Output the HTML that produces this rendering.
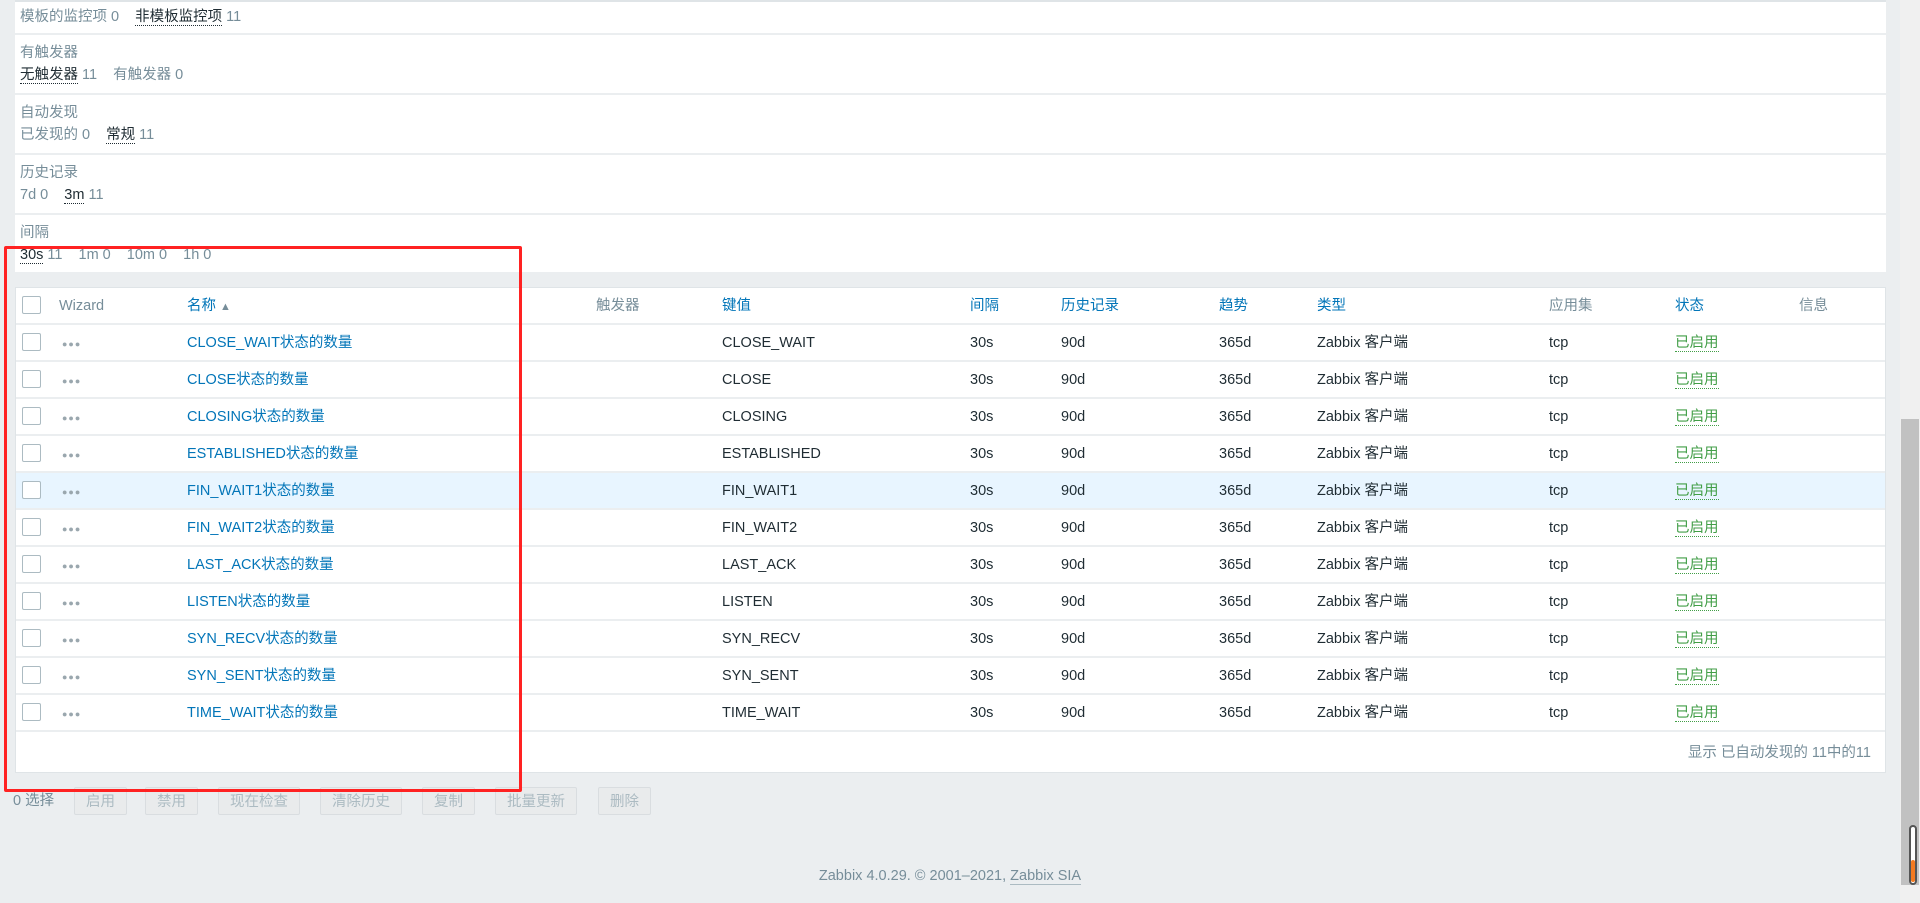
<!DOCTYPE html>
<html><head><meta charset="utf-8"><style>
*{margin:0;padding:0;box-sizing:border-box}
body{width:1920px;height:903px;overflow:hidden;background:#ebeef0;font-family:"Liberation Sans","Noto Sans CJK SC",sans-serif;font-size:14.5px;line-height:18px;color:#1f2c33;position:relative}
.abs{position:absolute}
.filter{left:15px;top:0;width:1871px;height:272px;background:#fff;border-top:2px solid #dfe4e7}
.sec{position:absolute;left:0;width:100%;border-bottom:2px solid #ebeef0}
.lbl{position:absolute;left:5px;color:#768d99;height:18px}
.val{position:absolute;left:5px;color:#768d99;white-space:nowrap;height:18px}
.val u{color:#1f2c33;text-decoration:none;border-bottom:1px dotted #1f2c33}
.val span{margin-right:12px}
.tbl{left:15px;top:287px;width:1871px;height:486px;background:#fff;border:1px solid #dfe4e7}
.row{position:absolute;left:0;width:100%;height:37px;border-bottom:2px solid #ebeef0}
.row div{position:absolute;top:9px;white-space:nowrap;height:18px;line-height:18px}
.cb{width:19px;height:19px;border:1px solid #acbbc2;border-radius:2px;background:#fff;top:8px!important;left:6px}
.lnk{color:#0275b8}
.hd{color:#768d99}
.en{color:#429e47;border-bottom:1px dotted #429e47}
.dots{color:#9aa7ae;font-size:9px;letter-spacing:1px}
.btn{position:absolute;top:787px;height:28px;border:1px solid #d9dde0;background:#e9ebec;color:#acbbc2;font-size:14.5px;padding:5px 11px 0;border-radius:2px}
</style></head><body>
<div class="abs filter">
 <div class="sec" style="top:0;height:33px"><div class="val" style="top:6px"><span>模板的监控项 0</span> <span><u>非模板监控项</u> 11</span></div></div>
 <div class="sec" style="top:33px;height:60px"><div class="lbl" style="top:9px">有触发器</div><div class="val" style="top:31px"><span><u>无触发器</u> 11</span> <span>有触发器 0</span></div></div>
 <div class="sec" style="top:93px;height:60px"><div class="lbl" style="top:9px">自动发现</div><div class="val" style="top:31px"><span>已发现的 0</span> <span><u>常规</u> 11</span></div></div>
 <div class="sec" style="top:153px;height:60px"><div class="lbl" style="top:9px">历史记录</div><div class="val" style="top:31px"><span>7d 0</span> <span><u>3m</u> 11</span></div></div>
 <div class="sec" style="top:213px;height:59px;border:none"><div class="lbl" style="top:9px">间隔</div><div class="val" style="top:31px"><span><u>30s</u> 11</span> <span>1m 0</span> <span>10m 0</span> <span>1h 0</span></div></div>
</div>
<div class="abs tbl">
 <div class="row" style="top:0"><div class="cb"></div><div class="hd" style="left:43px">Wizard</div><div class="lnk" style="left:171px">名称 <span style="color:#768d99;font-size:11px">▲</span></div><div class="hd" style="left:580px">触发器</div><div class="lnk" style="left:706px">键值</div><div class="lnk" style="left:954px">间隔</div><div class="lnk" style="left:1045px">历史记录</div><div class="lnk" style="left:1203px">趋势</div><div class="lnk" style="left:1301px">类型</div><div class="hd" style="left:1533px">应用集</div><div class="lnk" style="left:1659px">状态</div><div class="hd" style="left:1783px">信息</div></div>
</div>
<div class="abs" style="top:792px;color:#768d99;left:13px">0 选择</div>
<div class="btn" style="left:74px">启用</div>
<div class="btn" style="left:145px">禁用</div>
<div class="btn" style="left:218px">现在检查</div>
<div class="btn" style="left:320px">清除历史</div>
<div class="btn" style="left:422px">复制</div>
<div class="btn" style="left:495px">批量更新</div>
<div class="btn" style="left:598px">删除</div>
<div class="abs" style="left:0;width:1900px;top:867px;text-align:center;color:#768d99">Zabbix 4.0.29. © 2001–2021, <span style="border-bottom:1px solid #acbbc2">Zabbix SIA</span></div>
<div class="abs" style="left:1900px;top:0;width:20px;height:903px;background:#f0f0f0"></div>
<div class="abs" style="left:1901px;top:419px;width:18px;height:466px;background:#c1c1c1"></div>
<div class="abs" style="left:1909px;top:825px;width:8px;height:60px;border:2px solid #555;border-radius:4px;background:#fff"></div>
<div class="abs" style="left:1911px;top:860px;width:4px;height:22px;background:#f47a20;border-radius:2px"></div>
<div class="abs" style="left:4px;top:246px;width:518px;height:546px;border:3px solid #f22;border-radius:2px"></div>
<script>
const names=["CLOSE_WAIT","CLOSE","CLOSING","ESTABLISHED","FIN_WAIT1","FIN_WAIT2","LAST_ACK","LISTEN","SYN_RECV","SYN_SENT","TIME_WAIT"];
const t=document.querySelector('.tbl');let h='';
names.forEach((n,i)=>{h+=`<div class="row" style="top:${37+37*i}px;${i==4?'background:#e8f5ff':''}"><div class="cb"></div><div class="dots" style="left:46px;top:10px">●●●</div><div class="lnk" style="left:171px">${n}状态的数量</div><div style="left:706px">${n}</div><div style="left:954px">30s</div><div style="left:1045px">90d</div><div style="left:1203px">365d</div><div style="left:1301px">Zabbix 客户端</div><div style="left:1533px">tcp</div><div class="en" style="left:1659px">已启用</div></div>`});
h+=`<div style="position:absolute;right:14px;top:456px;color:#768d99;line-height:18px">显示 已自动发现的 11中的11</div>`;
t.innerHTML+=h;
</script>
</body></html>
